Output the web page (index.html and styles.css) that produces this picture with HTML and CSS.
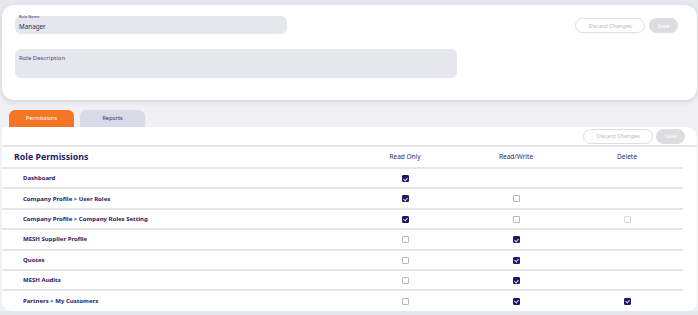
FILE: index.html
```html
<!DOCTYPE html>
<html lang="en">
<head>
    <meta charset="UTF-8">
    <meta name="viewport" content="width=device-width, initial-scale=1.0">
    <title>Edit Role</title>
    <link rel="stylesheet" href="styles.css">
</head>
<body>
    <div class="role-card">
        <div class="fields">
            <div class="field name-field">
                <span class="field-label">Role Name</span>
                <span class="field-value">Manager</span>
            </div>
            <div class="field desc-field">
                <span class="field-placeholder">Role Description</span>
            </div>
        </div>
        <div class="actions">
            <button class="btn-outline">Discard Changes</button>
            <button class="btn-save">Save</button>
        </div>
    </div>

    <div class="tabs">
        <div class="tab active">Permissions</div>
        <div class="tab">Reports</div>
    </div>

    <div class="perm-card">
        <div class="toolbar">
            <button class="btn-outline">Discard Changes</button>
            <button class="btn-save">Save</button>
        </div>
        <table class="perm-table">
            <thead>
                <tr>
                    <th class="col-name">Role Permissions</th>
                    <th class="col-check">Read Only</th>
                    <th class="col-check col-rw">Read/Write</th>
                    <th class="col-check">Delete</th>
                </tr>
            </thead>
            <tbody>
                <tr>
                    <td>Dashboard</td>
                    <td><span class="box checked"></span></td>
                    <td></td>
                    <td></td>
                </tr>
                <tr>
                    <td>Company Profile &gt; User Roles</td>
                    <td><span class="box checked"></span></td>
                    <td><span class="box"></span></td>
                    <td></td>
                </tr>
                <tr>
                    <td>Company Profile &gt; Company Roles Setting</td>
                    <td><span class="box checked"></span></td>
                    <td><span class="box"></span></td>
                    <td><span class="box faint"></span></td>
                </tr>
                <tr>
                    <td>MESH Supplier Profile</td>
                    <td><span class="box"></span></td>
                    <td><span class="box checked"></span></td>
                    <td></td>
                </tr>
                <tr>
                    <td>Quotes</td>
                    <td><span class="box"></span></td>
                    <td><span class="box checked"></span></td>
                    <td></td>
                </tr>
                <tr>
                    <td>MESH Audits</td>
                    <td><span class="box"></span></td>
                    <td><span class="box checked"></span></td>
                    <td></td>
                </tr>
                <tr>
                    <td>Partners &gt; My Customers</td>
                    <td><span class="box"></span></td>
                    <td><span class="box checked"></span></td>
                    <td><span class="box checked"></span></td>
                </tr>
            </tbody>
        </table>
    </div>
</body>
</html>
```

FILE: styles.css
```css
body {
    margin: 0;
    padding: 5px 1px 0 2px;
    font-family: 'Noto Sans', 'DejaVu Sans', sans-serif;
    background: linear-gradient(#e7e7ef, #f1f1f5 120px, #f2f2f5);
    color: #1f2166;
}
button {
    font-family: inherit;
    cursor: pointer;
}

/* top card */
.role-card {
    height: 95px;
    box-sizing: border-box;
    padding: 11px 19px 0 13px;
    background: white;
    border-radius: 12px;
    box-shadow: 0 2px 5px rgba(70, 70, 130, 0.18);
    display: flex;
    justify-content: space-between;
    align-items: flex-start;
}
.fields {
    width: 442px;
}
.field {
    background-color: #e6e6ee;
    border-radius: 6px;
    box-sizing: border-box;
    font-size: 6px;
    line-height: 8px;
}
.name-field {
    width: 272px;
    height: 18px;
    padding: 0 4px;
    display: flex;
    flex-direction: column;
}
.field-label {
    font-size: 4px;
    line-height: 4px;
    margin-top: -1px;
    color: #2a2d6e;
}
.field-value {
    font-size: 6.3px;
    line-height: 8px;
    margin-top: 4px;
    color: #2a2d5e;
}
.desc-field {
    margin-top: 15px;
    height: 29px;
    padding: 5px 4px;
}
.field-placeholder {
    font-size: 6px;
    color: #3e4a80;
}
.actions {
    display: flex;
    gap: 4px;
    margin-top: 2px;
}
.btn-outline {
    height: 15px;
    width: 70px;
    padding: 0;
    background: white;
    border: 1px solid #dcdce4;
    border-radius: 8px;
    color: #b8b8c2;
    font-size: 5.5px;
}
.btn-save {
    height: 15px;
    width: 29px;
    padding: 0;
    background-color: #dddde0;
    border: none;
    border-radius: 8px;
    color: white;
    font-size: 5.5px;
}

/* tabs */
.tabs {
    display: flex;
    gap: 6px;
    padding-left: 7px;
    margin-top: 10px;
}
.tab {
    width: 65px;
    height: 17px;
    line-height: 17px;
    text-align: center;
    border-radius: 6px 6px 0 0;
    background-color: #d8dbe7;
    font-size: 5.5px;
    color: #2a2d6e;
}
.tab.active {
    background-color: #f47624;
    color: white;
}

/* permissions card */
.perm-card {
    background: white;
    border-radius: 0 10px 10px 10px;
    overflow: hidden;
}
.toolbar {
    height: 20px;
    display: flex;
    justify-content: flex-end;
    align-items: center;
    gap: 3px;
    padding-right: 12px;
    border-bottom: 2px solid #e6e6ea;
    box-sizing: border-box;
}
.perm-table {
    border-collapse: collapse;
    table-layout: fixed;
    width: 681px;
    font-size: 6px;
}
th, td {
    box-sizing: border-box;
    padding: 0;
    line-height: 8px;
}
.col-name {
    width: 347px;
}
.col-check {
    width: 112px;
}
.col-rw {
    width: 110px;
}
th {
    height: 21px;
    font-weight: normal;
    font-size: 6.5px;
    color: #2a2d6e;
    text-align: center;
    border-bottom: 2px solid #e6e6ea;
}
th.col-name {
    text-align: left;
    padding-left: 12px;
    font-weight: bold;
    font-size: 8.8px;
    color: #1f2166;
}
td {
    height: 20.4px;
    text-align: center;
    border-bottom: 2px solid #e6e6ea;
}
td:first-child {
    text-align: left;
    padding-left: 21px;
    font-weight: bold;
    font-size: 6px;
    color: #1f2166;
}
tr:last-child td {
    border-bottom: none;
}
.box {
    display: inline-block;
    width: 7px;
    height: 7px;
    box-sizing: border-box;
    border: 1px solid #b7b7bd;
    border-radius: 1px;
    vertical-align: middle;
    position: relative;
}
.box.faint {
    border-color: #d8d8dc;
}
.box.checked {
    background-color: #1c1a62;
    border-color: #1c1a62;
}
.box.checked::after {
    content: '';
    position: absolute;
    left: 1.5px;
    top: 0.5px;
    width: 2px;
    height: 3px;
    border-right: 1px solid #cfd2ff;
    border-bottom: 1px solid #cfd2ff;
    transform: rotate(40deg);
}
```
